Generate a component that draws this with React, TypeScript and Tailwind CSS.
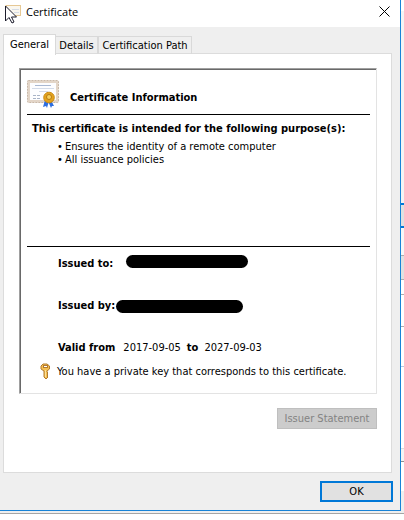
import { ReactNode } from 'react';

const tabs = [
  { label: 'General', className: 'w-[53px] h-[21px] bg-white pb-[2px] border-b-0 -mb-px' },
  { label: 'Details', className: 'w-[42px] h-[18px] border-l-0 border-b-0' },
  { label: 'Certification Path', className: 'w-[94px] h-[18px] border-b-0' },
];

const purposes = ['Ensures the identity of a remote computer', 'All issuance policies'];

function CursorIcon() {
  return (
    <svg width="17" height="21" viewBox="0 0 17 21" aria-hidden="true">
      <rect x="1" y="1.500" width="14.500" height="10" fill="#faf7ef" stroke="#e6c894" />
      <path d="M7 5.500h7M9 8.500h5" stroke="#d5dce6" />
      <path d="M.5 2v15l3.500-3.500 3 5.500 2-1-2.500-5h5z" fill="#fff" stroke="#1b1b2b" />
    </svg>
  );
}

function CertificateIcon() {
  return (
    <svg width="33" height="29" viewBox="0 0 33 29" aria-hidden="true">
      <rect x="0.5" y="0.5" width="31" height="22" rx="1" fill="#e3d5c7" stroke="#c9b8a8" strokeDasharray="2 1" />
      <rect x="3" y="3" width="26" height="17" fill="#fdfdff" />
      <path d="M8 5.5h16" stroke="#a9b8d2" />
      <path d="M5 8.5h22M12 11.5h9" stroke="#d3dbe9" />
      <path d="M6 15.5h7M6 18.5h8" stroke="#a9b4c8" strokeDasharray="3 1" />
      <path d="M18 20l-2 7 3-1 1 2 2-7z" fill="#2f6fe0" />
      <path d="M24 20l3 6-2 0-1 2-3-7z" fill="#2f6fe0" />
      <circle cx="22" cy="17.500" r="5.300" fill="#e5a21c" stroke="#c98c18" />
      <circle cx="22" cy="17" r="2.500" fill="#f6cf5e" stroke="#b47a14" />
    </svg>
  );
}

function KeyIcon() {
  return (
    <svg width="11" height="17" viewBox="0 0 11 17" aria-hidden="true">
      <path d="M3 1h4l2.500 2v3L7 8v1l1 1-1 1 1 1-1 1 1 1-2 2-2-2V8L1 6V3z" fill="#f5c052" stroke="#b37a2e" />
      <rect x="3.500" y="2.500" width="4" height="2" fill="#fff" stroke="#b37a2e" />
      <path d="M5.500 7v7" stroke="#fbe09a" />
    </svg>
  );
}

function Field({ label, children }: { label: string; children: ReactNode }) {
  return (
    <div className="flex h-[42px] items-center pl-[31px]">
      <dt className="font-bold">{label}</dt>
      <dd className="flex">{children}</dd>
    </div>
  );
}

// Edge of the window that sits behind the dialog
function BackgroundEdge() {
  return (
    <div aria-hidden="true" className="w-[3px] shrink-0 bg-[#f4f4f4]">
      <div className="h-[11px] bg-white" />
      <div className="h-[192px]" />
      <div className="h-[25px] border-y-2 border-[#0078d7] bg-[#e1e1e1]" />
      <div className="h-[27px] bg-[#f7f7f7]" />
      <div className="h-[25px] border-y border-[#adadad] bg-[#e1e1e1]" />
      <div className="h-[14px] bg-white" />
      <div className="h-[33px] border-y border-[#adadad] bg-white" />
      <div className="h-[40px] border-b border-[#b5c9e0] bg-white" />
      <div className="h-[82px] border-b border-[#dcdcdc] bg-white" />
      <div className="h-[13px] border-b border-[#909090]" />
      <div className="h-[29px] bg-white" />
      <div className="h-[20px] bg-[#efefef]" />
    </div>
  );
}

export default function App() {
  return (
    <div className="bg-white font-['DejaVu_Sans_Condensed','Open_Sans',sans-serif] text-[11px] leading-[13px] text-black">
      <div className="flex">
        <main className="min-w-0 flex-1 border-r border-b border-[#1883d7] bg-[#efefef]">
          <header className="flex h-[27px] items-start bg-white pt-[4px] pr-[10px] pl-[5px]">
            <CursorIcon />
            <h1 className="ml-[4px] flex-1 font-['Open_Sans',sans-serif] leading-[16px]">Certificate</h1>
            <button type="button" aria-label="Close" className="mt-[2px]">
              <svg width="11" height="11" viewBox="0 0 11 11" aria-hidden="true">
                <path d="M.5.5l10 10M10.500.5l-10 10" stroke="#000" fill="none" />
              </svg>
            </button>
          </header>

          <div className="pt-[7px] pr-[8px] pl-[3px]">
            <div role="tablist" className="flex h-[20px] items-end">
              {tabs.map((tab, i) => (
                <button
                  key={tab.label}
                  type="button"
                  role="tab"
                  aria-selected={i === 0}
                  className={`border border-[#d9d9d9] whitespace-nowrap ${tab.className}`}
                >
                  {tab.label}
                </button>
              ))}
            </div>

            <section role="tabpanel" className="-mt-px border border-[#dcdcdc] bg-white pt-[14px] pr-[14px] pb-[43px] pl-[15px]">
              <div className="h-[326px] border-t border-r border-b border-l border-t-[#a0a0a0] border-r-[#e3e3e3] border-b-[#e3e3e3] border-l-[#a0a0a0]">
                <div className="h-full border-t border-l border-[#696969] px-[6px]">
                  <div className="flex h-[45px] items-start border-b border-black pt-[10px]">
                    <CertificateIcon />
                    <h2 className="mt-[11px] ml-[10px] font-bold">Certificate Information</h2>
                  </div>
                  <div className="h-[132px] border-b border-black pt-[7px] pl-[5px]">
                    <h3 className="font-bold">This certificate is intended for the following purpose(s):</h3>
                    <ul className="mt-[5px] pl-[25px]">
                      {purposes.map((purpose) => (
                        <li key={purpose} className="flex">
                          <span className="w-[8px]">•</span>
                          {purpose}
                        </li>
                      ))}
                    </ul>
                  </div>
                  <dl className="-mt-[5px]">
                    <Field label="Issued to:">
                      <span className="mb-[4px] ml-[13px] h-[13px] w-[122px] rounded-full bg-black" />
                    </Field>
                    <Field label="Issued by:">
                      <span className="mt-[2px] ml-px h-[13px] w-[127px] rounded-full bg-black" />
                    </Field>
                    <Field label="Valid from">
                      <span className="ml-[8px]">2017-09-05</span>
                      <b className="mx-[6px]">to</b>
                      <span>2027-09-03</span>
                    </Field>
                  </dl>
                  <p className="-mt-[5px] flex items-center pl-[13px]">
                    <KeyIcon />
                    <span className="ml-[6px] whitespace-nowrap">You have a private key that corresponds to this certificate.</span>
                  </p>
                </div>
              </div>
              <div className="mt-[14px] flex justify-end">
                <button type="button" disabled className="h-[21px] w-[100px] border border-[#bfbfbf] bg-[#cccccc] text-[#838383]">
                  Issuer Statement
                </button>
              </div>
            </section>
          </div>

          <footer className="flex justify-end pt-[8px] pr-[7px] pb-[8px]">
            <button type="button" className="h-[21px] w-[73px] border-2 border-[#0078d7] bg-[#e1e1e1]">
              OK
            </button>
          </footer>
        </main>
        <BackgroundEdge />
      </div>
      <div className="h-[3px] border-b border-[#a5a5a5] bg-[#efefef]" />
    </div>
  );
}
